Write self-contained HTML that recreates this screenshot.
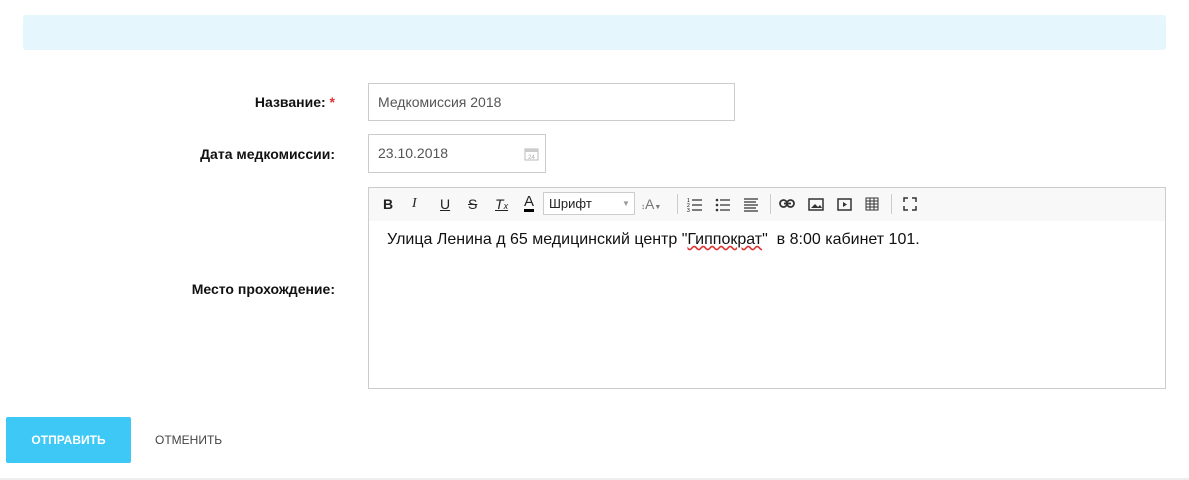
<!DOCTYPE html>
<html><head><meta charset="utf-8"><style>
body{margin:0;width:1189px;height:480px;background:#fff;font-family:"Liberation Sans",sans-serif;position:relative;overflow:hidden}
.a{position:absolute}
.lbl{font-size:14px;font-weight:bold;color:#111;text-align:right;width:200px;left:135px}
.inp{border:1px solid #ccc;box-sizing:border-box;font-size:14px;color:#555;padding-left:9px}
.tb span{position:absolute;top:0;font-size:14px;color:#222}
</style></head><body>
<div class="a" style="left:23px;top:15px;width:1143px;height:35px;background:#e6f6fd;border-radius:3px"></div>

<div class="a lbl" style="top:94px">Название: <span style="color:#d33">*</span></div>
<div class="a inp" style="left:368px;top:83px;width:367px;height:38px;line-height:36px">Медкомиссия 2018</div>

<div class="a lbl" style="top:146px">Дата медкомиссии:</div>
<div class="a inp" style="left:368px;top:134px;width:178px;height:39px;line-height:37px">23.10.2018
<svg style="position:absolute;right:6px;top:12px" width="15" height="14" viewBox="0 0 15 14"><rect x="1" y="2" width="13" height="11" fill="none" stroke="#bbb"/><rect x="1" y="2" width="13" height="3" fill="#ccc"/><text x="7.5" y="12" font-size="6" fill="#aaa" text-anchor="middle" font-family="Liberation Sans">24</text></svg></div>

<div class="a lbl" style="top:281px">Место прохождение:</div>
<div class="a" style="left:368px;top:187px;width:798px;height:202px;border:1px solid #ccc;box-sizing:border-box">
 <div class="a tb" style="left:0;top:0;width:796px;height:33px;background:#f8f8f8">
  <span style="left:14px;top:8px;font-weight:bold">B</span>
  <span style="left:43px;top:8px;font-style:italic;font-family:'Liberation Serif',serif">I</span>
  <span style="left:71px;top:8px;text-decoration:underline">U</span>
  <span style="left:99px;top:8px;text-decoration:line-through">S</span>
  <span style="left:126px;top:8px;font-style:italic;text-decoration:underline">T<small style="font-size:9px">x</small></span>
  <span style="left:155px;top:7px;font-size:15px;border-bottom:3px solid #000;line-height:14px">A</span>
  <div class="a" style="left:174px;top:4px;width:92px;height:23px;border:1px solid #ccc;background:#fff;box-sizing:border-box;font-size:13px;line-height:21px;padding-left:5px;color:#222">Шрифт<span style="left:78px;top:0;font-size:8px;color:#999">▼</span></div>
  <span style="left:272px;top:8px;color:#777;font-size:14px"><small style="font-size:8px">↕</small>A<small style="font-size:7px">▼</small></span>
  <div class="a" style="left:308px;top:6px;width:1px;height:20px;background:#ccc"></div>
  <svg class="a" style="left:318px;top:9px" width="16" height="15"><text x="0" y="5" font-size="5" font-family="Liberation Sans">1</text><text x="0" y="10" font-size="5" font-family="Liberation Sans">2</text><text x="0" y="15" font-size="5" font-family="Liberation Sans">3</text><path d="M5 3h10M5 8h10M5 13h10" stroke="#333" stroke-width="1.3"/></svg>
  <svg class="a" style="left:346px;top:9px" width="16" height="15"><circle cx="2" cy="3" r="1.3" fill="#333"/><circle cx="2" cy="8" r="1.3" fill="#333"/><circle cx="2" cy="13" r="1.3" fill="#333"/><path d="M5 3h10M5 8h10M5 13h10" stroke="#333" stroke-width="1.3"/></svg>
  <svg class="a" style="left:374px;top:9px" width="16" height="15"><path d="M1 2h14M1 5h12M1 8h14M1 11h12M1 14h14" stroke="#333" stroke-width="1.2"/></svg>
  <div class="a" style="left:401px;top:6px;width:1px;height:20px;background:#ccc"></div>
  <svg class="a" style="left:410px;top:10px" width="17" height="12"><rect x="1" y="2" width="7" height="7" rx="3.5" fill="none" stroke="#333" stroke-width="1.8"/><rect x="8" y="2" width="7" height="7" rx="3.5" fill="none" stroke="#333" stroke-width="1.8"/><path d="M5 5.5h7" stroke="#333" stroke-width="1.8"/></svg>
  <svg class="a" style="left:439px;top:10px" width="16" height="13"><rect x="1" y="1" width="14" height="11" fill="none" stroke="#333" stroke-width="1.5"/><path d="M3 10l4-4 3 3 2-2 2 3z" fill="#333"/></svg>
  <svg class="a" style="left:468px;top:10px" width="15" height="13"><rect x="1" y="1" width="13" height="11" fill="none" stroke="#333" stroke-width="1.5"/><path d="M6 4v5l4-2.5z" fill="#333"/></svg>
  <svg class="a" style="left:496px;top:9px" width="14" height="14"><rect x="1" y="1" width="12" height="12" fill="none" stroke="#333"/><path d="M1 4h12M1 7h12M1 10h12M5 1v12M9 1v12" stroke="#333"/></svg>
  <div class="a" style="left:522px;top:6px;width:1px;height:20px;background:#ccc"></div>
  <svg class="a" style="left:534px;top:9px" width="14" height="14"><path d="M1 5V1h4M9 1h4v4M13 9v4H9M5 13H1V9" fill="none" stroke="#333" stroke-width="1.5"/></svg>
 </div>
 <div class="a" style="left:18px;top:43px;font-size:16px;color:#111">Улица Ленина д 65 медицинский центр "<span style="text-decoration:underline wavy #d33">Гиппократ</span>"&nbsp; в 8:00 кабинет 101.</div>
</div>

<div class="a" style="left:6px;top:417px;width:125px;height:46px;background:#3ec8f5;border-radius:2px;color:#fff;font-size:12px;font-weight:bold;text-align:center;line-height:46px">ОТПРАВИТЬ</div>
<div class="a" style="left:155px;top:433px;font-size:12px;color:#444">ОТМЕНИТЬ</div>
<div class="a" style="left:0;top:478px;width:1189px;height:2px;background:#eee"></div>
</body></html>
